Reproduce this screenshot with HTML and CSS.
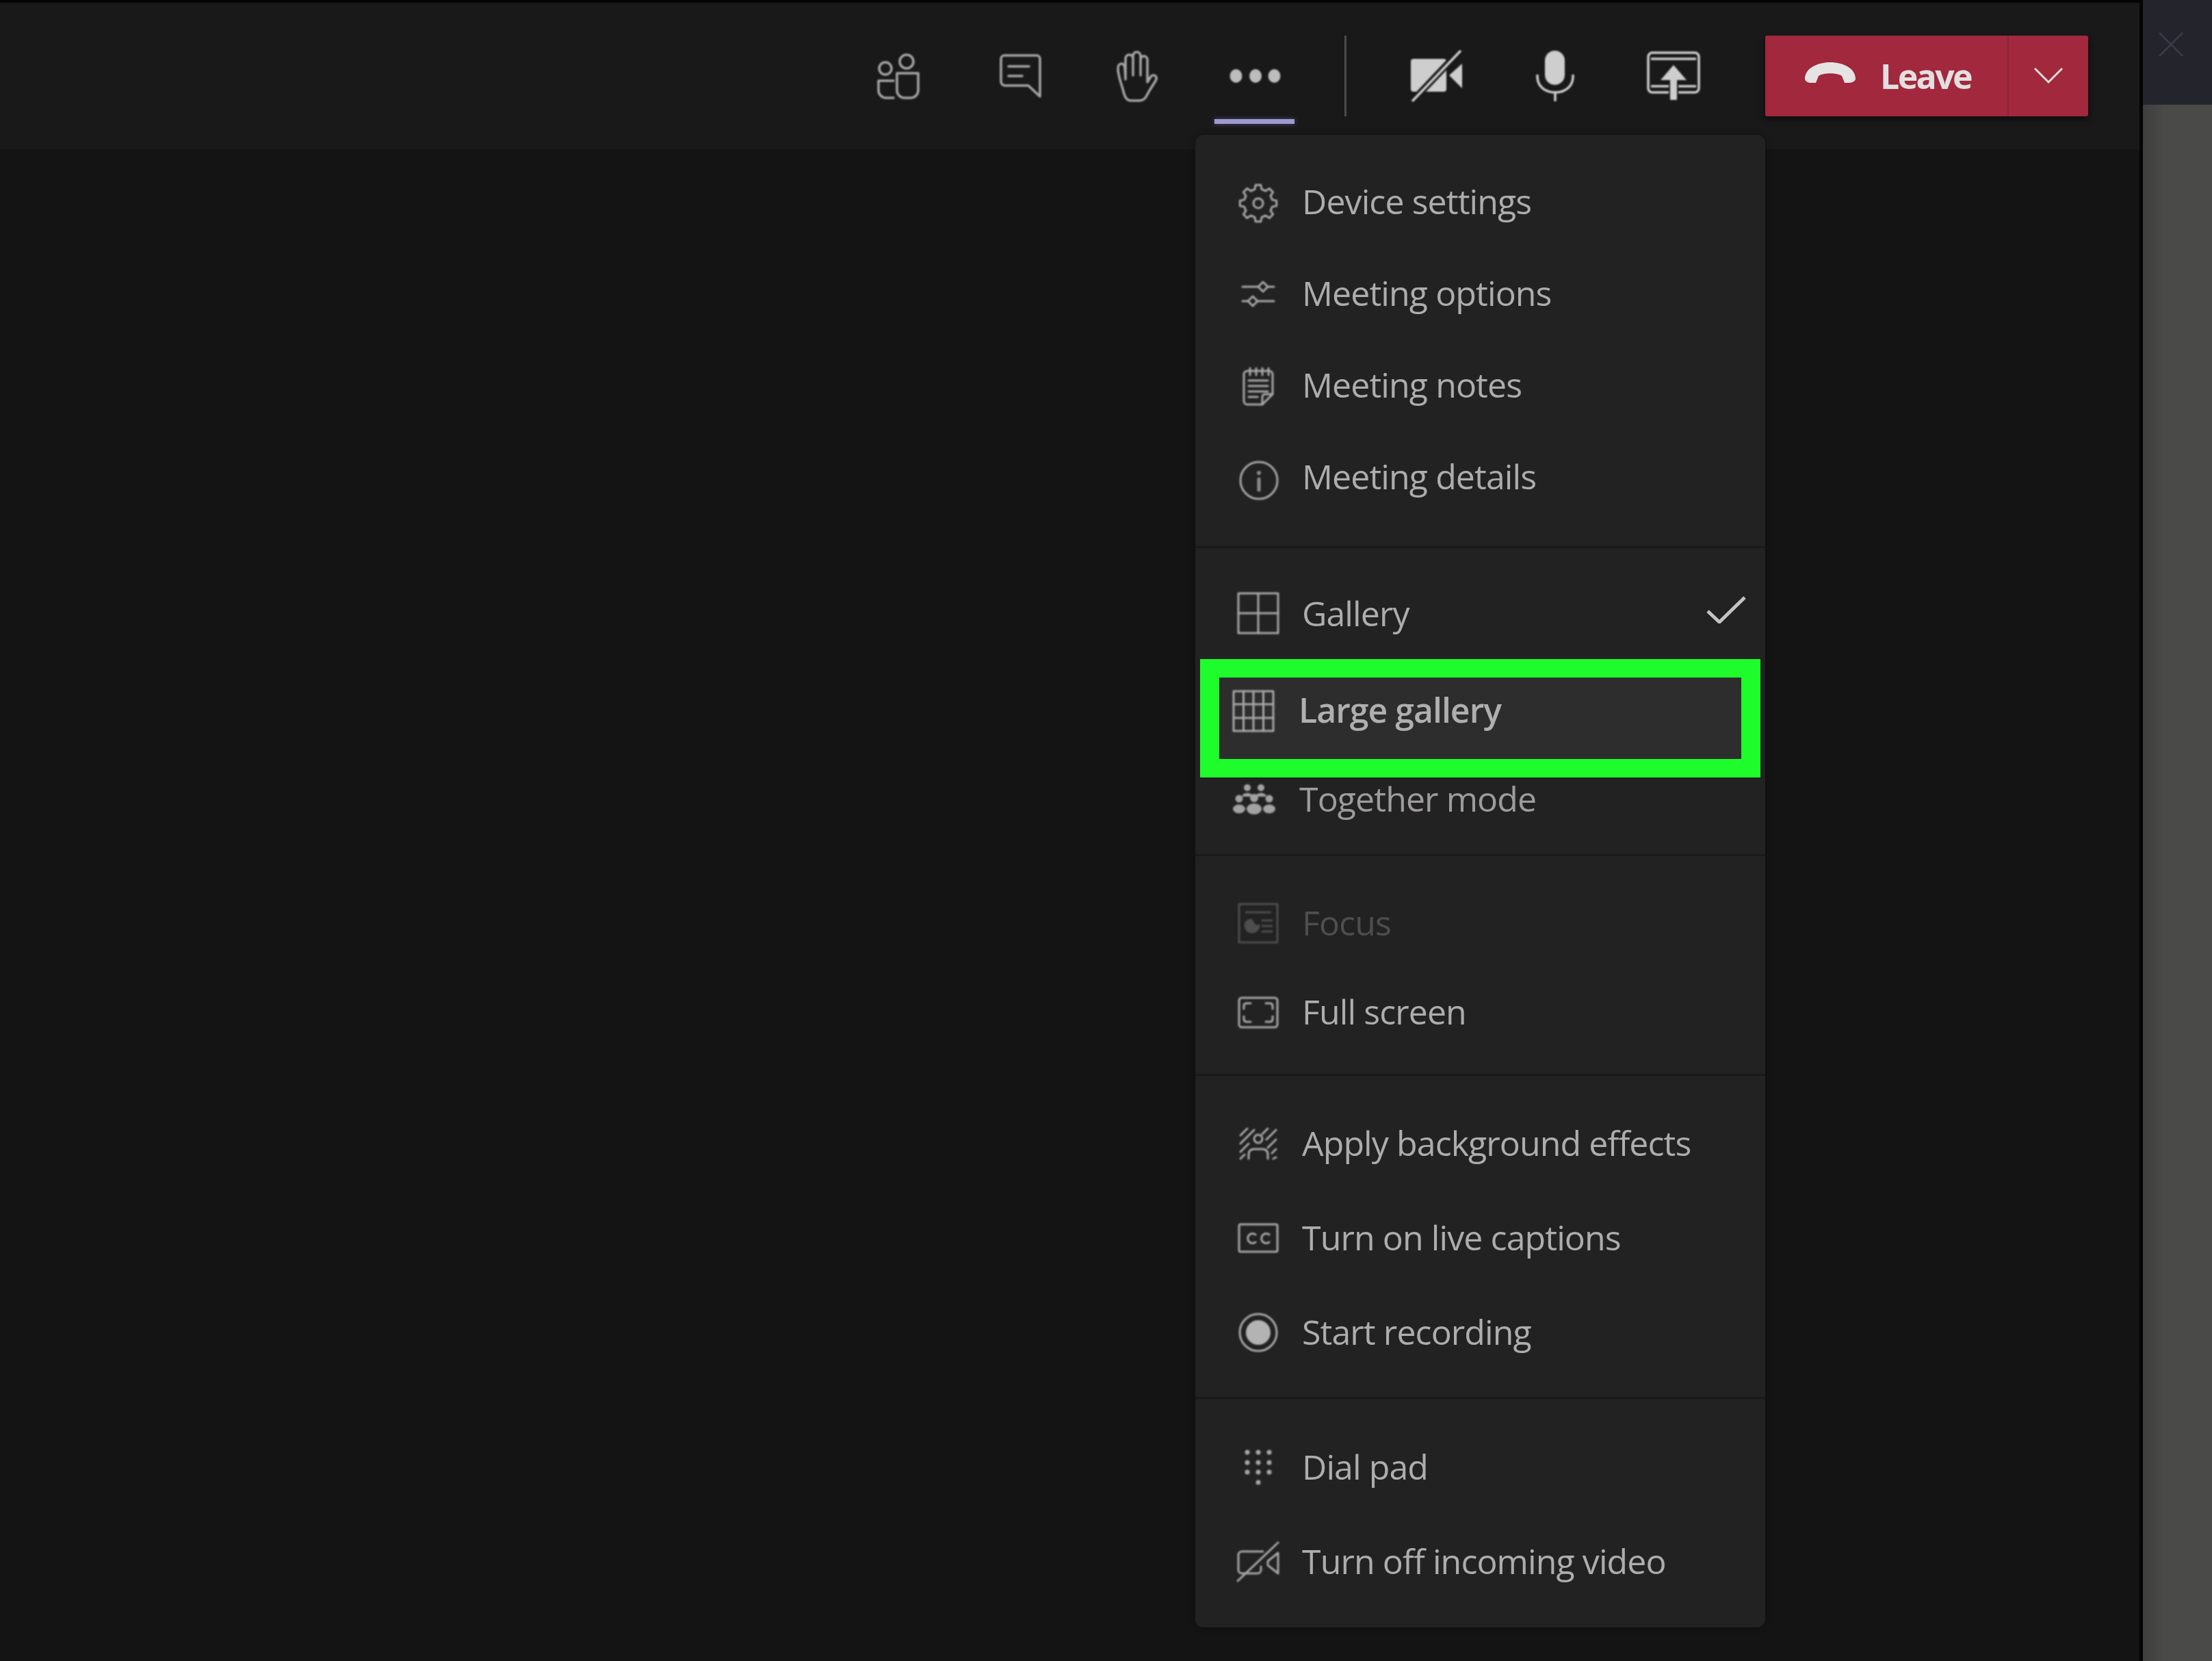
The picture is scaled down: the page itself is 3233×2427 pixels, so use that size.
FILE: index.html
```html
<!DOCTYPE html>
<html lang="en">
<head>
<meta charset="utf-8">
<title>Meeting</title>
<link rel="stylesheet" href="styles.css">
</head>
<body>
<div class="app">
  <div class="stage">
    <header class="toolbar">
      <div class="tool"><svg class="ic" width="61" height="67" viewBox="0 0 61 67"><circle cx="12" cy="22" r="9"/><circle cx="43" cy="12" r="10"/><path d="M29 29H60V54a11 11 0 0 1-11 11H40a11 11 0 0 1-11-11Z"/><path d="M24 40H2V54a11 11 0 0 0 11 11H24"/></svg></div>
      <div class="tool"><svg class="ic" width="61" height="65" viewBox="0 0 61 65"><path d="M7 2H54a5 5 0 0 1 5 5V62L42 46H8a6 6 0 0 1-6-6V7a5 5 0 0 1 5-5Z"/><path d="M13 18H43M13 32H33"/></svg></div>
      <div class="tool"><svg class="ic" width="62" height="75" viewBox="0 0 62 75"><path d="M22 73C14 73 12 64 10 56 7 46 3 36 3 26 3 17 12 17 13 25L14 42V12C14 4 25 4 25 12V36 8C25 0 36 0 36 8V36 14C36 6 46 6 46 14V46L51 38C55 33 62 38 58 44L48 60C44 68 42 73 34 73Z"/></svg></div>
      <div class="tool tool-active"><svg class="fill-ic" width="76" height="22" viewBox="0 0 76 22"><ellipse cx="9.500" cy="11" rx="9" ry="10"/><ellipse cx="38" cy="11" rx="9" ry="10"/><ellipse cx="65.500" cy="11" rx="9" ry="10"/></svg></div>
      <div class="tool-sep"></div>
      <div class="tool"><svg class="fill-ic bright" width="76" height="76" viewBox="0 0 76 76"><rect x="0" y="13" width="52" height="48" rx="4"/><path d="M56 37 75 20V56Z"/><path class="cut" d="M73 0 2 75"/><path class="slash" d="M73 1 2 75"/></svg></div>
      <div class="tool"><svg class="bright-line" width="58" height="76" viewBox="0 0 58 76"><rect class="solid" x="14" y="1" width="29" height="50" rx="14.500"/><path d="M3 36V39C3 53 14 62 29 62 44 62 55 53 55 39V36M29 62V75"/></svg></div>
      <div class="tool"><svg class="bright-line" width="78" height="72" viewBox="0 0 78 72"><rect x="2" y="2" width="74" height="58" rx="6"/><path d="M6 11H72M6 51H72"/><path class="halo" d="M39 20 20 42H34V71H44V42H58Z"/></svg></div>
      <div class="leave">
        <div class="leave-main"><svg class="hangup" width="74" height="30" viewBox="0 0 74 30"><path d="M0 24C0 9 18 0 37 0 56 0 74 9 74 24 74 30 62 31 58 30L54 20C47 15 27 15 20 20L16 30C10 31 0 30 0 24Z"/></svg><span class="leave-label">Leave</span></div>
        <div class="leave-more"><svg class="chev" width="44" height="24" viewBox="0 0 44 24"><path d="M2 2 22 22 42 2"/></svg></div>
      </div>
    </header>
    <main class="canvas"></main>

    <nav class="menu">
      <section class="group g-one">
        <div class="row"><span class="ri ri-low"><svg class="ic thin" width="60" height="56" viewBox="0 0 60 56"><g transform="translate(30 28)"><polygon points="26.700,3.800 20.400,5.100 18,10.800 21.600,16.200 16.200,21.600 10.800,18 5.100,20.400 3.800,26.700 -3.800,26.700 -5.100,20.400 -10.800,18 -16.200,21.600 -21.600,16.200 -18,10.800 -20.400,5.100 -26.700,3.800 -26.700,-3.800 -20.400,-5.100 -18,-10.800 -21.600,-16.200 -16.200,-21.600 -10.800,-18 -5.100,-20.400 -3.800,-26.700 3.800,-26.700 5.100,-20.400 10.800,-18 16.200,-21.600 21.600,-16.200 18,-10.800 20.400,-5.100 26.700,-3.800"/><circle r="7"/></g></svg></span><span class="rl">Device settings</span></div>
        <div class="row"><span class="ri"><svg class="ic thin" width="46" height="40" viewBox="0 0 46 40"><path d="M0 10H23M37 10H46M0 31H8M22 31H46"/><path d="M30 3 37 10 30 17 23 10ZM15 24 22 31 15 38 8 31Z"/></svg></span><span class="rl">Meeting options</span></div>
        <div class="row"><span class="ri ri-low"><svg class="ic thin" width="46" height="56" viewBox="0 0 46 56"><path d="M7 5H39a5 5 0 0 1 5 5V39L29 54H7a5 5 0 0 1-5-5V10a5 5 0 0 1 5-5Z"/><path d="M11 1V11M20 1V11M29 1V11M38 1V11M9 19H37M9 27H37M9 35H37M9 43H22M44 39H33a4 4 0 0 0-4 4V54"/></svg></span><span class="rl">Meeting notes</span></div>
        <div class="row"><span class="ri ri-lower"><svg class="ic thin" width="60" height="60" viewBox="0 0 60 60"><circle cx="31" cy="30" r="27"/><path class="wide" d="M31 28V44"/><circle class="dot" cx="31" cy="19" r="3"/></svg></span><span class="rl">Meeting details</span></div>
      </section>

      <section class="group g-two">
        <div class="row row-gallery"><span class="ri ri-high"><svg class="ic thin" width="62" height="62" viewBox="0 0 62 62"><rect x="2" y="2" width="58" height="58"/><path d="M31 2V60M2 31H60"/></svg></span><span class="rl">Gallery</span><svg class="check" width="58" height="40" viewBox="0 0 58 40"><path d="M2 22 19 38 56 2"/></svg></div>
        <div class="row-mark"><span class="ri"><svg class="ic thin" width="62" height="62" viewBox="0 0 62 62"><rect x="2" y="2" width="58" height="58"/><path d="M16.500 2V60M31 2V60M45.500 2V60M2 21H60M2 41H60"/></svg></span><span class="rl">Large gallery</span></div>
        <div class="row row-together"><span class="ri"><svg class="fill-ic people" width="62" height="44" viewBox="0 0 62 44"><circle cx="21" cy="5" r="5"/><circle cx="41" cy="5" r="5"/><path d="M14 15Q21 10 28 15V18H14ZM34 15Q41 10 48 15V18H34Z"/><circle cx="9" cy="21" r="5.500"/><circle cx="31" cy="20" r="6"/><circle cx="53" cy="21" r="5.500"/><ellipse cx="9" cy="36" rx="9" ry="6.500"/><ellipse cx="31" cy="36" rx="11" ry="8"/><ellipse cx="53" cy="36" rx="9" ry="6.500"/></svg></span><span class="rl">Together mode</span></div>
      </section>

      <section class="group g-three">
        <div class="row row-off"><span class="ri"><svg class="ic thin" width="60" height="60" viewBox="0 0 60 60"><rect x="2" y="2" width="56" height="56"/><path d="M12 14H48M36 26H50M36 34H50M36 42H50"/><path class="solid-ic" d="M11 33A10 10 0 0 0 31 33C28 38 22 30 20 25 14 25 11 29 11 33Z"/></svg></span><span class="rl">Focus</span></div>
        <div class="row"><span class="ri"><svg class="ic thin" width="60" height="47" viewBox="0 0 60 47"><rect x="2" y="2" width="56" height="43" rx="4"/><path d="M19 10H13Q9 10 9 14V18M41 10H47Q51 10 51 14V18M19 37H13Q9 37 9 33V29M41 37H47Q51 37 51 33V29"/></svg></span><span class="rl">Full screen</span></div>
      </section>

      <section class="group g-four">
        <div class="row"><span class="ri"><svg class="ic thin dash" width="56" height="48" viewBox="0 0 56 48"><circle cx="28" cy="17" r="6"/><path d="M14 46V40Q14 32 22 32H34Q42 32 42 40V46M2 12 12 2M2 24 22 4M2 36 14 24M2 46 8 40M42 2 34 10M54 4 40 18M54 18 42 30M54 32 48 38M54 44 50 46"/></svg></span><span class="rl">Apply background effects</span></div>
        <div class="row"><span class="ri"><svg class="ic thin" width="60" height="44" viewBox="0 0 60 44"><rect x="2" y="2" width="56" height="40" rx="2"/><path d="M26 17A7 7 0 1 0 26 28M46 17A7 7 0 1 0 46 28"/></svg></span><span class="rl">Turn on live captions</span></div>
        <div class="row"><span class="ri"><svg class="ic thin" width="60" height="60" viewBox="0 0 60 60"><circle cx="30" cy="30" r="27"/><circle class="solid-ic" cx="30" cy="30" r="18"/></svg></span><span class="rl">Start recording</span></div>
      </section>

      <section class="group g-five">
        <div class="row"><span class="ri"><svg class="fill-ic dim" width="40" height="52" viewBox="0 0 40 52"><circle cx="4" cy="4" r="3.500"/><circle cx="20" cy="4" r="3.500"/><circle cx="36" cy="4" r="3.500"/><circle cx="4" cy="19" r="3.500"/><circle cx="20" cy="19" r="3.500"/><circle cx="36" cy="19" r="3.500"/><circle cx="4" cy="33" r="3.500"/><circle cx="20" cy="33" r="3.500"/><circle cx="36" cy="33" r="3.500"/><circle cx="20" cy="48" r="3.500"/></svg></span><span class="rl">Dial pad</span></div>
        <div class="row"><span class="ri"><svg class="ic thin" width="62" height="58" viewBox="0 0 62 58"><path d="M38 14H7a5 5 0 0 0-5 5V41a5 5 0 0 0 5 5H30a5 5 0 0 0 5-5V36M45 28 60 16V46L45 34Z"/><path d="M60 1 1 57"/></svg></span><span class="rl">Turn off incoming video</span></div>
      </section>
    </nav>
  </div>
  <aside class="side">
    <div class="side-top"><svg class="close" width="38" height="38" viewBox="0 0 38 38"><path d="M2 2 36 36M36 2 2 36"/></svg></div>
    <div class="side-rest"></div>
  </aside>
</div>
</body>
</html>
```
FILE: styles.css
```css
* { box-sizing: border-box; }
html, body { margin: 0; height: 100%; background: #151415; }
body { font-family: "Open Sans", "Noto Sans", sans-serif; overflow: hidden; }

.app { display: flex; width: 3233px; height: 2427px; }
.stage { position: relative; flex: 1; display: flex; flex-direction: column; border-top: 4px solid #050505; border-right: 5px solid #050505; }

.toolbar {
  height: 214px;
  flex: none;
  background: #1a191a;
  display: grid;
  grid-template-columns: 1fr 176px 182px 160px 186px 78px 188px 158px 188px 512px;
  align-items: center;
  padding-right: 75px;
}
.toolbar > :first-child { grid-column: 2; }
.canvas { flex: 1; background: #151415; }

.tool { display: flex; align-items: center; justify-content: center; height: 100%; }
.tool svg { filter: blur(0.8px); }
.tool-active { position: relative; }
.tool-active::after {
  content: "";
  position: absolute;
  left: 33px;
  width: 117px;
  bottom: 37px;
  height: 7px;
  background: #9d9ad0;
  box-shadow: 0 0 6px rgba(130, 126, 200, .5);
  filter: blur(0.6px);
}
.tool-sep { width: 3px; height: 118px; margin-left: 37px; background: #4d4c4d; }

.ic { fill: none; stroke: #a8a7a7; stroke-width: 3.500; stroke-linejoin: round; stroke-linecap: round; overflow: visible; }
.ic.thin { stroke-width: 3; }
.fill-ic { fill: #bebdbd; overflow: visible; }
.fill-ic.bright { fill: #cfcece; }
.fill-ic .cut { fill: none; stroke: #1a191a; stroke-width: 10; }
.fill-ic .slash { fill: none; stroke: #cfcece; stroke-width: 3.500; }
.bright-line { fill: none; stroke: #cfcece; stroke-width: 3.500; overflow: visible; stroke-linejoin: round; }
.bright-line .solid { fill: #cfcece; stroke: none; }
.bright-line .halo { fill: #cfcece; stroke: #1a191a; stroke-width: 4; paint-order: stroke; }

.leave {
  height: 118px;
  margin-left: 40px;
  width: 472px;
  display: flex;
  background: #a1283d;
  border-radius: 3px;
  box-shadow: 0 4px 10px rgba(0, 0, 0, .55);
}
.leave-main { width: 356px; display: flex; align-items: center; padding-left: 58px; gap: 36px; border-right: 2px solid #8e2336; }
.leave-more { flex: 1; display: flex; align-items: center; justify-content: center; }
.leave-label { color: #e3dfe0; font-weight: 700; font-size: 50px; letter-spacing: -2.600px; filter: blur(0.7px); }
.hangup { fill: #e6e3e3; margin-bottom: 10px; }
.chev { fill: none; stroke: #e0dada; stroke-width: 3; margin-bottom: 2px; }

.menu {
  position: absolute;
  left: 1747px;
  top: 193px;
  width: 833px;
  background: #232223;
  border-radius: 12px;
  box-shadow: 0 0 10px rgba(0, 0, 0, .35);
  color: #aeadad;
  height: 2181px;
  display: flex;
  flex-direction: column;
}
.group { border-bottom: 3px solid #1a191a; flex: none; }
.group:last-child { border-bottom: 0; }
.g-one { height: 604px; padding-top: 31px; }
.g-one .row { height: 134px; }
.g-two { height: 450px; padding-top: 30px; }
.g-two .row-gallery { height: 132px; }
.g-two .row-together { height: 64px; padding-left: 55px; }
.g-three { height: 321px; padding-top: 33px; }
.g-three .row { height: 130px; }
.g-four { height: 472px; padding-top: 30px; }
.g-four .row { height: 138px; }
.g-five { padding-top: 31px; }
.g-five .row { height: 138px; }

.row { display: flex; align-items: center; padding-left: 61px; position: relative; }
.ri { width: 62px; height: 62px; flex: none; display: flex; align-items: center; justify-content: center; margin-right: 33px; }
.ri svg { filter: blur(0.8px); }
.ri-low { padding-top: 3px; }
.ri-lower { padding-top: 9px; }
.ri-high { padding-bottom: 3px; }
.rl { font-size: 50px; font-weight: 500; letter-spacing: -0.900px; line-height: 1; margin-bottom: 3px; filter: blur(0.7px); white-space: nowrap; }

.row-gallery .check { position: absolute; right: 28px; top: 40px; fill: none; stroke: #c4c3c3; stroke-width: 5; filter: blur(0.6px); }
.row-mark {
  height: 173px;
  margin: 0 7px;
  border: solid #1efc2c;
  border-width: 27px 28px;
  background: #2e2d2e;
  display: flex;
  align-items: center;
  padding: 0 0 22px 19px;
  color: #b0afaf;
}
.row-mark .ri { margin-right: 35px; }
.row-mark .rl { font-weight: 600; letter-spacing: -1px; }
.row-together .ri { margin-right: 35px; }
.row-together { color: #9d9b9c; }

.row-off { color: #4f4e4f; }
.row-off .ic { stroke: #4f4e4f; }
.row-off .solid-ic { fill: #4f4e4f; stroke: #4f4e4f; }
.solid-ic { fill: #b4b3b3; stroke: none; }
.ic .dot { fill: #8e8d8d; stroke: none; }
.ic .wide { stroke: #8e8d8d; stroke-width: 5; }
.fill-ic.dim { fill: #a8a7a7; }
.fill-ic.people { fill: #a3a2a2; }

.side { width: 101px; flex: none; display: flex; flex-direction: column; background: #484848; }
.side-top { height: 153px; background: #24242c; display: flex; justify-content: center; padding: 46px 19px 0 0; }
.side-rest { flex: 1; background: linear-gradient(90deg, #3e3e3e, #4a4a49 30%); }
.close { stroke: #3a3a44; stroke-width: 3; filter: blur(0.6px); }
```
